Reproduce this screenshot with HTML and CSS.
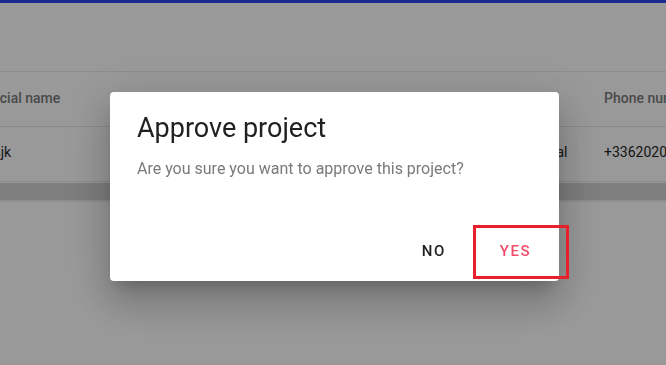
FILE: index.html
```html
<!DOCTYPE html>
<html lang="en">
<head>
    <meta charset="UTF-8">
    <meta name="viewport" content="width=device-width, initial-scale=1.0">
    <title>Projects</title>
    <link rel="stylesheet" href="styles.css">
</head>
<body>
    <div class="topbar"></div>

    <div class="page">
        <div class="table">
            <div class="row head">
                <div class="cell">Commercial name</div>
                <div class="cell">Client</div>
                <div class="cell">Email</div>
                <div class="cell"></div>
                <div class="cell">Phone number</div>
            </div>
            <div class="row">
                <div class="cell">dsfdsfdsjk</div>
                <div class="cell">test</div>
                <div class="cell">a@b.fr</div>
                <div class="cell">Commercial</div>
                <div class="cell">+33620202020</div>
            </div>
        </div>
        <div class="scrollbar"></div>
    </div>

    <!-- Fenetre de confirmation -->
    <div class="overlay">
        <div class="dialog">
            <h2>Approve project</h2>
            <p>Are you sure you want to approve this project?</p>
            <div class="actions">
                <button class="btn">NO</button>
                <button class="btn btn-yes">YES</button>
            </div>
            <span class="highlight"></span>
        </div>
    </div>
</body>
</html>
```

FILE: styles.css
```css
body {
    font-family: Roboto, 'Liberation Sans', sans-serif;
    background-color: #fff;
    margin: 0;
    padding: 0;
    overflow: hidden;
}
.topbar {
    height: 3px;
    background-color: #2d46ee;
}
.page {
    padding-top: 68px;
    overflow: hidden;
}
.table {
    margin-left: -54px;
    width: 800px;
    border-top: 1px solid #ebebeb;
}
.row {
    display: grid;
    grid-template-columns: 180px 260px 106px 112px 142px;
    height: 54px;
    align-items: center;
    border-bottom: 1px solid #e6e6e6;
    font-size: 14px;
    color: #262626;
    white-space: nowrap;
}
.cell {
    padding-bottom: 4px;
}
.row.head {
    font-weight: 500;
    color: #7c7c7c;
}
.row.head .cell {
    padding-bottom: 3px;
}
.scrollbar {
    margin-top: 1px;
    height: 17px;
    background-color: #d2d2d2;
    border-bottom: 2px solid #ebebeb;
}
.overlay {
    position: fixed;
    left: 0;
    top: 0;
    width: 100%;
    height: 100%;
    background-color: rgba(0, 0, 0, 0.4);
    display: flex;
    justify-content: center;
    align-items: flex-start;
    padding-top: 92px;
    box-sizing: border-box;
}
.dialog {
    position: relative;
    width: 449px;
    margin-left: 3px;
    height: 189px;
    box-sizing: border-box;
    padding: 20px 27px 0 27px;
    background-color: #fff;
    border-radius: 4px;
    box-shadow: 0 11px 15px -7px rgba(0, 0, 0, 0.2), 0 24px 38px 3px rgba(0, 0, 0, 0.14), 0 9px 46px 8px rgba(0, 0, 0, 0.12);
}
.dialog h2 {
    margin: 0;
    font-size: 27px;
    font-weight: 400;
    line-height: 32px;
    color: #212121;
}
.dialog p {
    margin: 15px 0 0 0;
    font-size: 16px;
    line-height: 20px;
    color: #7a7a7a;
}
.actions {
    display: flex;
    justify-content: flex-end;
    margin-top: 54px;
    margin-right: -17px;
}
.btn {
    font-family: inherit;
    background: none;
    border: none;
    padding: 0 16px;
    height: 36px;
    font-size: 15px;
    font-weight: 500;
    letter-spacing: 1.5px;
    color: #212121;
    cursor: pointer;
}
.btn-yes {
    margin-left: 20px;
    color: #f24c6a;
    padding: 0 18px;
}
/* cadre rouge autour du bouton */
.highlight {
    position: absolute;
    left: 363px;
    top: 133px;
    width: 90px;
    height: 48px;
    border: 3px solid #e8202a;
}
```
